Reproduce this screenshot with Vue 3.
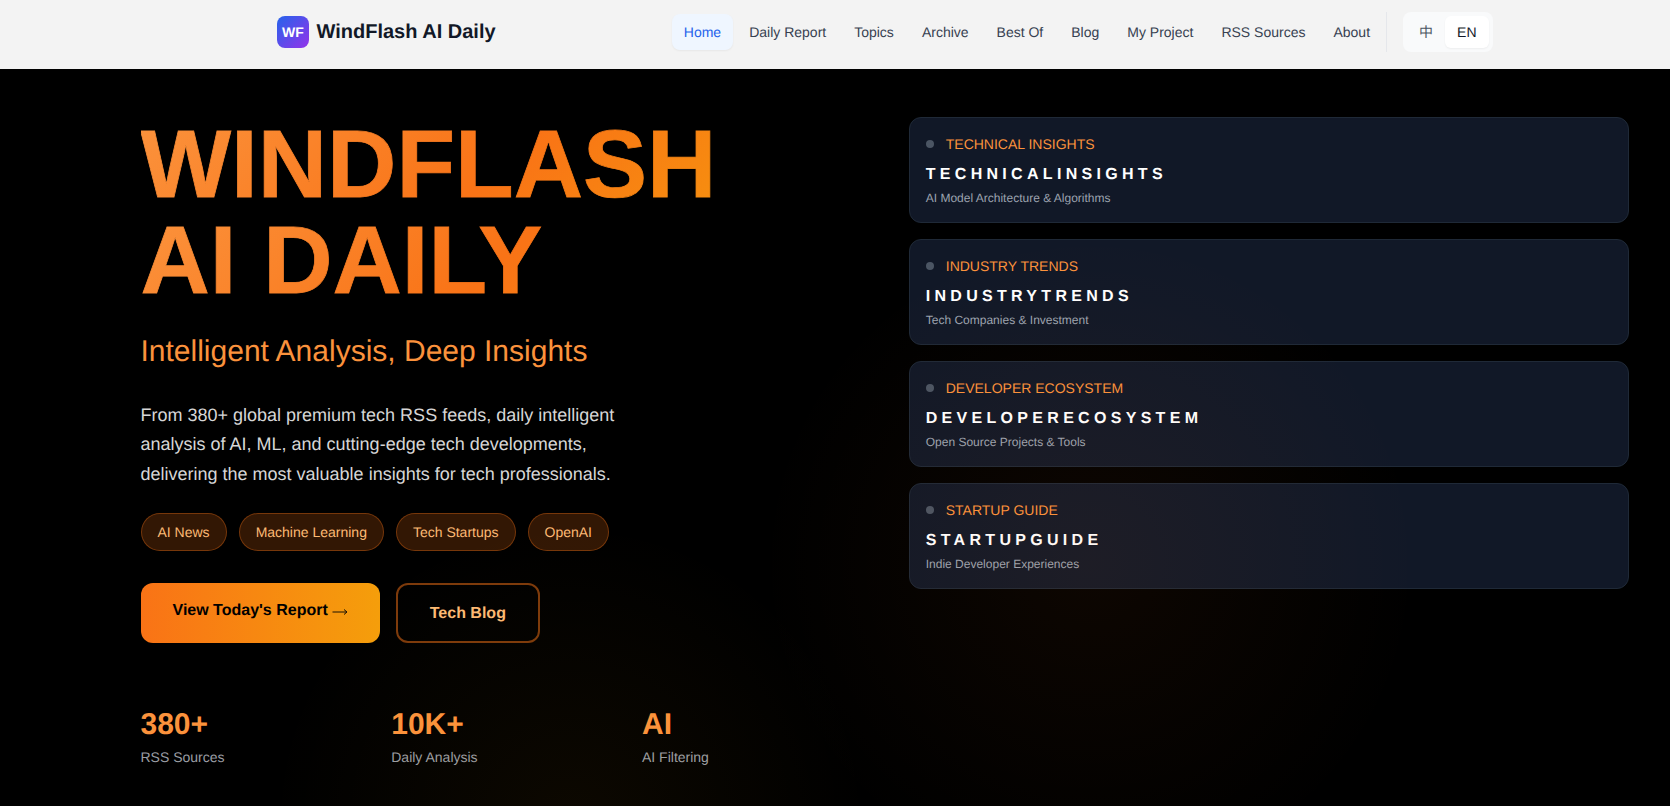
<template>
  <div class="page">
    <header class="topbar">
      <div class="brand">
        <span class="logo">WF</span>
        <span class="brand-name">WindFlash AI Daily</span>
      </div>
      <nav class="nav">
        <a v-for="(item, i) in navItems" :key="item" class="nav-link" :class="{ active: i === 0 }">{{ item }}</a>
      </nav>
      <span class="divider"></span>
      <div class="lang">
        <span class="lang-btn">中</span>
        <span class="lang-btn on">EN</span>
      </div>
    </header>

    <main class="hero">
      <section class="left">
        <h1 class="title">
          <span>WINDFLASH</span>
          <span>AI DAILY</span>
        </h1>
        <p class="subtitle">Intelligent Analysis, Deep Insights</p>
        <p class="desc">
          From 380+ global premium tech RSS feeds, daily intelligent analysis of AI, ML, and cutting-edge tech developments, delivering the most valuable insights for tech professionals.
        </p>
        <div class="tags">
          <span v-for="tag in tags" :key="tag" class="tag">{{ tag }}</span>
        </div>
        <div class="actions">
          <a class="btn btn-primary">
            View Today's Report
            <svg class="arrow" width="16" height="8" viewBox="0 0 16 8" fill="none" stroke="#1a1205" stroke-width="1">
              <path d="M0.5 4H15M12 1.5L15 4L12 6.5" />
            </svg>
          </a>
          <a class="btn btn-outline">Tech Blog</a>
        </div>
        <div class="stats">
          <div v-for="stat in stats" :key="stat.label">
            <div class="stat-value">{{ stat.value }}</div>
            <div class="stat-label">{{ stat.label }}</div>
          </div>
        </div>
      </section>

      <section class="right">
        <article v-for="card in cards" :key="card.label" class="card">
          <div class="card-head">
            <span class="dot"></span>
            <span class="card-label">{{ card.label }}</span>
          </div>
          <h3 class="card-title">{{ card.label.replace(' ', '') }}</h3>
          <p class="card-sub">{{ card.sub }}</p>
        </article>
      </section>

      <div class="glow"></div>
    </main>
  </div>
</template>

<script setup>
const navItems = ['Home', 'Daily Report', 'Topics', 'Archive', 'Best Of', 'Blog', 'My Project', 'RSS Sources', 'About']
const tags = ['AI News', 'Machine Learning', 'Tech Startups', 'OpenAI']
const stats = [
  { value: '380+', label: 'RSS Sources' },
  { value: '10K+', label: 'Daily Analysis' },
  { value: 'AI', label: 'AI Filtering' }
]
const cards = [
  { label: 'TECHNICAL INSIGHTS', sub: 'AI Model Architecture & Algorithms' },
  { label: 'INDUSTRY TRENDS', sub: 'Tech Companies & Investment' },
  { label: 'DEVELOPER ECOSYSTEM', sub: 'Open Source Projects & Tools' },
  { label: 'STARTUP GUIDE', sub: 'Indie Developer Experiences' }
]
</script>

<style>
html, body { margin: 0; background: #000; }
</style>

<style scoped>
.page {
  height: 806px;
  overflow: hidden;
  background: #000;
  font-family: "Liberation Sans", Arial, sans-serif;
  text-rendering: geometricPrecision;
}

.topbar {
  height: 69px;
  box-sizing: border-box;
  display: flex;
  align-items: center;
  padding: 0 177.5px 5px 277px;
  background: #f3f3f3;
}

.brand {
  display: flex;
  align-items: center;
  gap: 7.5px;
  margin-right: auto;
}

.logo {
  width: 32px;
  height: 32px;
  display: flex;
  align-items: center;
  justify-content: center;
  border-radius: 8px;
  background: linear-gradient(135deg, #2563eb, #9333ea);
  color: #fff;
  font-size: 14px;
  font-weight: 700;
}

.brand-name {
  font-size: 20px;
  font-weight: 700;
  color: #111827;
}

.nav {
  display: flex;
  gap: 4px;
}

.nav-link {
  padding: 10px 12px;
  font-size: 14px;
  line-height: 16px;
  border-radius: 8px;
  color: #374151;
}

.nav-link.active {
  color: #2563eb;
  background: #eff6ff;
  box-shadow: 0 1px 2px rgba(0, 0, 0, 0.05);
}

.divider {
  width: 1px;
  height: 40px;
  margin: 0 16px 0 4px;
  background: #e5e7eb;
}

.lang {
  display: flex;
  padding: 4px;
  border-radius: 8px;
  background: #f9fafb;
}

.lang-btn {
  padding: 8px 12px;
  font-size: 14px;
  line-height: 16px;
  border-radius: 6px;
  color: #4b5563;
  font-family: "Liberation Sans", "Noto Sans CJK SC", sans-serif;
}

.lang-btn.on {
  background: #fff;
  color: #111827;
  box-shadow: 0 1px 2px rgba(0, 0, 0, 0.05);
}

.hero {
  position: relative;
  height: 737px;
  box-sizing: border-box;
  display: grid;
  grid-template-columns: 1fr 1fr;
  gap: 48px;
  padding: 48px 41px 0 140.5px;
}

/* faint warm light that sits over the page and the cards */
.glow {
  position: absolute;
  inset: 0;
  pointer-events: none;
  background:
    radial-gradient(circle 330px at 1090px 495px, rgba(249, 115, 22, 0.055), transparent 100%),
    radial-gradient(circle 300px at 570px 751px, rgba(245, 158, 11, 0.05), transparent 100%);
}

.title {
  margin: 0;
  font-size: 96px;
  line-height: 96px;
  font-weight: 700;
}

.title span {
  display: block;
  background: linear-gradient(135deg, #fb923c, #f97316, #f59e0b);
  -webkit-background-clip: text;
  background-clip: text;
  color: transparent;
  -webkit-text-stroke: 0.8px transparent;
}

.subtitle {
  margin: 25px 0 0;
  font-size: 30px;
  line-height: 36px;
  color: #fb923c;
}

.desc {
  width: 490px;
  margin: 31px 0 0;
  font-size: 18px;
  line-height: 29.25px;
  color: #d6d6d6;
}

.tags {
  display: flex;
  gap: 12px;
  margin-top: 24px;
}

.tag {
  padding: 10px 16px;
  font-size: 14px;
  line-height: 16px;
  border-radius: 19px;
  border: 1px solid rgba(249, 115, 22, 0.35);
  background: rgba(249, 115, 22, 0.2);
  color: #fdba74;
}

.actions {
  display: flex;
  gap: 16px;
  margin-top: 32px;
}

.btn {
  height: 60px;
  box-sizing: border-box;
  display: flex;
  align-items: center;
  border-radius: 12px;
  font-size: 16px;
  font-weight: 700;
}

.btn-primary {
  padding: 0 32px 4px;
  background: linear-gradient(90deg, #f97316, #f59e0b);
  color: #000;
  white-space: nowrap;
}

.arrow {
  margin: 2px 0 0 4px;
}

.btn-outline {
  padding: 2px 32px 0;
  border: 2px solid rgba(249, 115, 22, 0.5);
  color: #fdba74;
}

.stats {
  display: grid;
  grid-template-columns: repeat(3, 1fr);
  gap: 32px;
  margin-top: 64px;
}

.stat-value {
  font-size: 30px;
  line-height: 36px;
  font-weight: 700;
  color: #fb923c;
}

.stat-label {
  margin-top: 4px;
  font-size: 14px;
  line-height: 20px;
  color: #9b9ea4;
}

.right {
  display: flex;
  flex-direction: column;
  gap: 16px;
}

.card {
  padding: 16px;
  border: 1px solid #1f2937;
  border-radius: 12px;
  background: #111827;
}

.card-head {
  display: flex;
  align-items: center;
  gap: 12px;
}

.dot {
  width: 8px;
  height: 8px;
  border-radius: 50%;
  background: #4b5563;
}

.card-label {
  font-size: 14px;
  line-height: 20px;
  color: #fb923c;
}

.card-title {
  margin: 9px 0 0;
  font-size: 16px;
  line-height: 24px;
  font-weight: 700;
  letter-spacing: 4.3px;
  color: #fff;
}

.card-sub {
  margin: 3px 0 0;
  font-size: 12px;
  line-height: 16px;
  color: #9ca3af;
}
</style>
